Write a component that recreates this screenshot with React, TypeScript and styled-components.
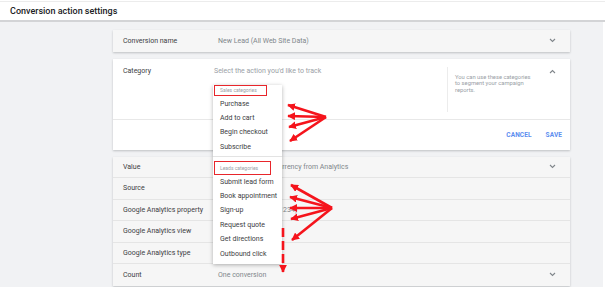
import React from "react";
import styled, { createGlobalStyle } from "styled-components";

const GlobalStyle = createGlobalStyle`
  html, body {
    margin: 0;
    padding: 0;
    background: #ffffff;
    overflow: hidden;
  }
  body {
    font-family: Roboto, "Liberation Sans", Arial, sans-serif;
  }
`;

const Page = styled.div`
  position: relative;
  width: 605px;
  height: 287px;
  overflow: hidden;
  background: #ffffff;
`;

const Header = styled.header`
  height: 18px;
  margin-top: 1px;
  border-top: 1px solid #ececec;
  border-bottom: 2px solid #d3d4d6;
  display: flex;
  align-items: center;
  padding-left: 10px;
  font-size: 9px;
  font-weight: 500;
  color: #202124;
`;

const Main = styled.main`
  width: 603px;
  height: 300px;
  background: #f1f2f4;
  box-sizing: border-box;
  padding: 8px 33px 0 113px;
  display: flex;
  flex-direction: column;
  gap: 7px;
`;

const Card = styled.section<{ $open?: boolean }>`
  position: relative;
  background: ${(p) => (p.$open ? "#ffffff" : "#f6f6f6")};
  box-shadow: 0 1px 2px rgba(60, 64, 67, 0.28);
  display: flex;
  flex-direction: column;
`;

const Row = styled.div<{ $last?: boolean }>`
  height: 21.5px;
  display: flex;
  align-items: center;
  padding: 0 14px 0 10px;
  border-bottom: ${(p) => (p.$last ? "none" : "1px solid #e5e5e5")};
  box-sizing: border-box;
  font-size: 7px;
`;

const Label = styled.div<{ $w?: number }>`
  width: ${(p) => p.$w ?? 95}px;
  flex-shrink: 0;
  color: #3c4043;
  white-space: nowrap;
`;

const Value = styled.div<{ $light?: boolean }>`
  flex: 1;
  color: ${(p) => (p.$light ? "#9aa0a6" : "#80868b")};
  white-space: nowrap;
`;

const Chevron = ({ up }: { up?: boolean }) => (
  <svg width="7" height="5" viewBox="0 0 7 5">
    <polyline
      points={up ? "1,4 3.5,1.5 6,4" : "1,1 3.5,3.5 6,1"}
      fill="none"
      stroke="#80868b"
      strokeWidth="1.1"
    />
  </svg>
);

const TopSection = styled.div`
  height: 60px;
  display: flex;
  padding: 0 14px 0 10px;
  border-bottom: 1px solid #e8e8e8;
  font-size: 7px;
`;

const TopCell = styled.div`
  padding-top: 8px;
`;

const Spacer = styled.div`
  flex: 1;
`;

const Help = styled.div`
  width: 82px;
  margin: 8px 12px 7px 0;
  padding: 7px 0 0 7px;
  border-left: 1px solid #ececec;
  font-size: 5.8px;
  line-height: 6.7px;
  color: #9aa0a6;
`;

const ChevronCell = styled.div`
  padding-top: 9px;
`;

const Actions = styled.div`
  height: 30px;
  display: flex;
  align-items: center;
  justify-content: flex-end;
  gap: 14px;
  padding-right: 8px;
`;

const TextButton = styled.span`
  font-size: 6.5px;
  font-weight: 700;
  color: #5b8def;
  letter-spacing: 0.1px;
`;

const Menu = styled.div`
  position: absolute;
  left: 100px;
  top: 26px;
  width: 69px;
  height: 179px;
  background: #ffffff;
  box-shadow: 0 1px 4px rgba(0, 0, 0, 0.3);
  z-index: 5;
  box-sizing: border-box;
  display: flex;
  flex-direction: column;
`;

const GroupTag = styled.div<{ $w: number; $h: number; $gap?: number }>`
  width: ${(p) => p.$w}px;
  height: ${(p) => p.$h}px;
  margin: 0 0 ${(p) => p.$gap ?? 0}px 1px;
  box-sizing: border-box;
  border: 1.5px solid #e8262b;
  display: flex;
  align-items: center;
  padding-left: 5px;
  font-size: 5px;
  color: #9aa0a6;
  white-space: nowrap;
`;

const MenuItem = styled.div`
  height: 14.4px;
  line-height: 14.4px;
  padding-left: 7px;
  font-size: 7px;
  color: #3c4043;
  white-space: nowrap;
`;

const MenuDivider = styled.div`
  height: 1px;
  background: #e3e3e3;
  margin: 1.5px 0 4px;
`;

const Overlay = styled.svg`
  position: absolute;
  left: 0;
  top: 0;
  pointer-events: none;
  z-index: 10;
`;

const salesItems = ["Purchase", "Add to cart", "Begin checkout", "Subscribe"];
const leadItems = [
  "Submit lead form",
  "Book appointment",
  "Sign-up",
  "Request quote",
  "Get directions",
  "Outbound click",
];

const fans: { from: [number, number]; to: [number, number][] }[] = [
  { from: [326, 117], to: [[288, 105], [288, 116], [289, 127], [290, 141]] },
  {
    from: [332, 208],
    to: [[291, 185], [290, 197], [290, 208], [291, 219], [292, 240]],
  },
];

const App = () => {
  return (
    <Page>
      <GlobalStyle />
      <Header>Conversion action settings</Header>
      <Main>
        <Card>
          <Row $last>
            <Label>Conversion name</Label>
            <Value>New Lead (All Web Site Data)</Value>
            <Chevron />
          </Row>
        </Card>

        <Card $open>
          <TopSection>
            <TopCell>
              <Label $w={91}>Category</Label>
            </TopCell>
            <TopCell>
              <Value $light>Select the action you'd like to track</Value>
            </TopCell>
            <Spacer />
            <Help>
              You can use these categories to segment your campaign reports.
            </Help>
            <ChevronCell>
              <Chevron up />
            </ChevronCell>
          </TopSection>
          <Actions>
            <TextButton>CANCEL</TextButton>
            <TextButton>SAVE</TextButton>
          </Actions>
          <Menu>
            <GroupTag $w={53} $h={11} $gap={1}>
              Sales categories
            </GroupTag>
            {salesItems.map((t) => (
              <MenuItem key={t}>{t}</MenuItem>
            ))}
            <MenuDivider />
            <GroupTag $w={57} $h={14}>
              Leads categories
            </GroupTag>
            {leadItems.map((t) => (
              <MenuItem key={t}>{t}</MenuItem>
            ))}
          </Menu>
        </Card>

        <Card>
          <Row>
            <Label>Value</Label>
            <Value>Use the value and currency from Analytics</Value>
            <Chevron />
          </Row>
          <Row>
            <Label>Source</Label>
          </Row>
          <Row>
            <Label>Google Analytics property</Label>
            <Value>Demo Account (UA-1234)</Value>
          </Row>
          <Row>
            <Label>Google Analytics view</Label>
          </Row>
          <Row>
            <Label>Google Analytics type</Label>
          </Row>
          <Row $last>
            <Label>Count</Label>
            <Value>One conversion</Value>
            <Chevron />
          </Row>
        </Card>
      </Main>

      <Overlay width="605" height="287" viewBox="0 0 605 287">
        <defs>
          <marker
            id="head"
            viewBox="0 0 10 10"
            refX="9"
            refY="5"
            markerWidth="3"
            markerHeight="3"
            orient="auto"
            markerUnits="strokeWidth"
          >
            <path d="M0,0 L10,5 L0,10 Z" fill="#f5141c" />
          </marker>
        </defs>
        {fans.map((f, i) =>
          f.to.map(([x, y], j) => (
            <line
              key={`${i}-${j}`}
              x1={f.from[0]}
              y1={f.from[1]}
              x2={x}
              y2={y}
              stroke="#f5141c"
              strokeWidth="2.6"
              markerEnd="url(#head)"
            />
          ))
        )}
        <line
          x1="283"
          y1="228"
          x2="283"
          y2="272"
          stroke="#f5141c"
          strokeWidth="2.6"
          strokeDasharray="9 4"
          markerEnd="url(#head)"
        />
      </Overlay>
    </Page>
  );
};

export default App;
